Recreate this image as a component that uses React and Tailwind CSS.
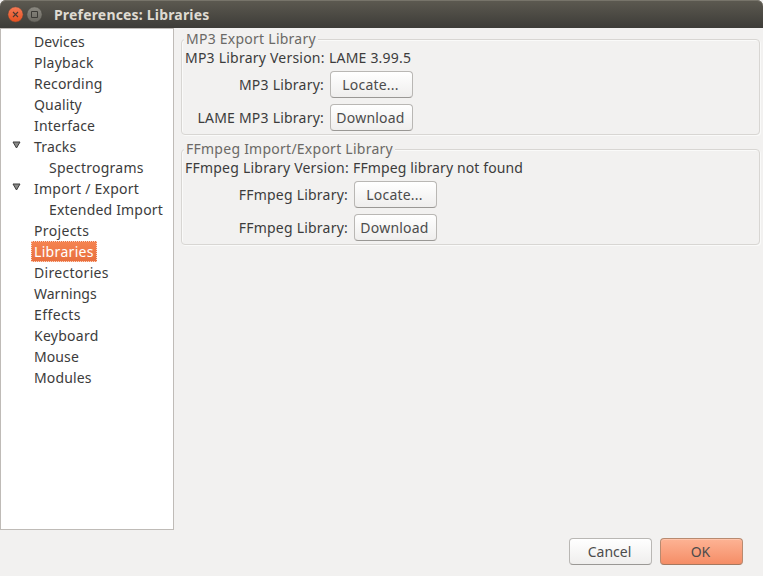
import React from "react";

const items = [
  { label: "Devices", tracking: "tracking-[0.12px]" },
  { label: "Playback", tracking: "tracking-[0.25px]" },
  { label: "Recording", tracking: "tracking-[0.2px]" },
  { label: "Quality", tracking: "tracking-[0.15px]" },
  { label: "Interface", tracking: "tracking-[0.2px]" },
  { label: "Tracks", tracking: "tracking-[0.15px]", open: true },
  { label: "Spectrograms", tracking: "tracking-[0.25px]", child: true },
  { label: "Import / Export", tracking: "tracking-[0.25px]", open: true },
  { label: "Extended Import", tracking: "tracking-[0.18px]", child: true },
  { label: "Projects", tracking: "tracking-[0.35px]" },
  { label: "Libraries", tracking: "tracking-[0.33px]", selected: true },
  { label: "Directories", tracking: "tracking-[0.3px]" },
  { label: "Warnings", tracking: "tracking-[0px]" },
  { label: "Effects", tracking: "tracking-[0.45px]" },
  { label: "Keyboard", tracking: "tracking-[0.27px]" },
  { label: "Mouse", tracking: "tracking-[0.1px]" },
  { label: "Modules", tracking: "tracking-[0.15px]" },
];

function TreeItem({ item }) {
  return (
    <li className={"flex h-[21px] items-center " + item.tracking}>
      <span className={item.selected ? "w-[30px]" : "flex w-[30px] justify-center pl-[1px]"}>
        {item.open && (
          <svg width="9" height="8" viewBox="0 0 9 8" className="mb-[3px]">
            <path d="M1 1h7L4.5 7z" fill="#8a8a88" stroke="#3c3c3c" />
          </svg>
        )}
      </span>
      {item.selected ? (
        <span className="flex h-[21px] w-[66px] items-center border border-dotted border-[#fbd5c5] bg-gradient-to-b from-[#f58350] to-[#e8703f] pl-[2px] text-white">
          {item.label}
        </span>
      ) : (
        <span className={item.child ? "pl-[18px]" : "pl-[3px]"}>{item.label}</span>
      )}
    </li>
  );
}

function Button({ children, primary }) {
  return (
    <button
      className={
        primary
          ? "flex h-[27px] w-[83px] items-center justify-center rounded-[4px] border border-[#b88a70] border-b-[#a5785f] bg-gradient-to-b from-[#fdb394] to-[#f58d66] pr-[2px] text-[#4c4c4c] shadow-[inset_0_1px_0_#ffc4aa]"
          : "flex h-[27px] w-[83px] items-center justify-center rounded-[4px] border border-[#b9b7b4] border-b-[#9a9895] bg-gradient-to-b from-white to-[#efeeed] pr-[2px] text-[#4c4c4c]"
      }
    >
      {children}
    </button>
  );
}

function Group({ title, version, value, valueTracking, rows, labelWidth }) {
  return (
    <fieldset className="flex h-[106px] flex-col tracking-[0.22px]">
      <div className="z-10 ml-[3px] flex h-[20px] w-fit items-center self-start bg-[#f2f1f0] px-[2px] tracking-[0.25px] text-[#6b6966]">
        {title}
      </div>
      <div className="-mt-[10px] h-[96px] rounded-[4px] border border-[#d8d6d3] pl-[3px] pt-[8px] shadow-[inset_1px_1px_0_#fafaf9,1px_1px_0_#fafaf9]">
        <div className="mb-[4px] flex h-[19px] items-center">
          <span className={labelWidth + " text-right"}>{version}</span>
          <span className={"ml-[5px] " + valueTracking}>{value}</span>
        </div>
        {rows.map(([label, action], i) => (
          <div key={i} className="mb-[6px] flex h-[27px] items-center">
            <span className={labelWidth + " text-right"}>{label}</span>
            <span className="ml-[6px]">
              <Button>{action}</Button>
            </span>
          </div>
        ))}
      </div>
    </fieldset>
  );
}

export default function App() {
  return (
    <div className="flex h-[576px] w-[763px] flex-col overflow-hidden bg-[#f2f1f0] font-['Noto_Sans',sans-serif] text-[14px] leading-[20px] whitespace-nowrap text-[#3c3c3c]">
      <header className="flex h-[28px] items-center rounded-t-[6px] bg-gradient-to-b from-[#5d5a51] to-[#3d3c38] pl-[7px] shadow-[inset_0_1px_0_#77746a]">
        <svg width="36" height="18" viewBox="0 0 36 18">
          <defs>
            <linearGradient id="close" x2="0" y2="1">
              <stop stopColor="#f47a56" />
              <stop offset="1" stopColor="#e5501f" />
            </linearGradient>
            <linearGradient id="max" x2="0" y2="1">
              <stop stopColor="#8b8981" />
              <stop offset="1" stopColor="#6a6861" />
            </linearGradient>
          </defs>
          <circle cx="8.5" cy="9.5" r="7.7" fill="url(#close)" stroke="#45433d" strokeWidth="0.6" />
          <path d="M6 7l5 5m0-5l-5 5" stroke="#4b3a32" strokeWidth="1.1" />
          <circle cx="27.5" cy="9.5" r="7.7" fill="url(#max)" stroke="#45433d" strokeWidth="0.6" />
          <path d="M24.5 6.5h6v6h-6z" fill="none" stroke="#3c3b37" />
        </svg>
        <h1 className="ml-[11px] pt-[1px] font-bold tracking-[0.18px] text-[#dfdbd2]">Preferences: Libraries</h1>
      </header>
      <div className="flex h-[502px]">
        <ul className="w-[174px] border border-[#bfbbb7] bg-white pt-[2px]">
          {items.map((item) => (
            <TreeItem key={item.label} item={item} />
          ))}
        </ul>
        <main className="ml-[7px] flex w-[579px] flex-col gap-[4px] pt-px">
          <Group
            title="MP3 Export Library"
            version="MP3 Library Version:"
            value="LAME 3.99.5"
            valueTracking="tracking-[0.2px]"
            labelWidth="w-[139px]"
            rows={[["MP3 Library:", "Locate..."], ["LAME MP3 Library:", "Download"]]}
          />
          <Group
            title="FFmpeg Import/Export Library"
            version="FFmpeg Library Version:"
            value="FFmpeg library not found"
            valueTracking="tracking-[0.12px]"
            labelWidth="w-[163px]"
            rows={[["FFmpeg Library:", "Locate..."], ["FFmpeg Library:", "Download"]]}
          />
        </main>
      </div>
      <footer className="flex justify-end gap-[8px] pt-[8px] pr-[20px]">
        <Button>Cancel</Button>
        <Button primary>OK</Button>
      </footer>
    </div>
  );
}
